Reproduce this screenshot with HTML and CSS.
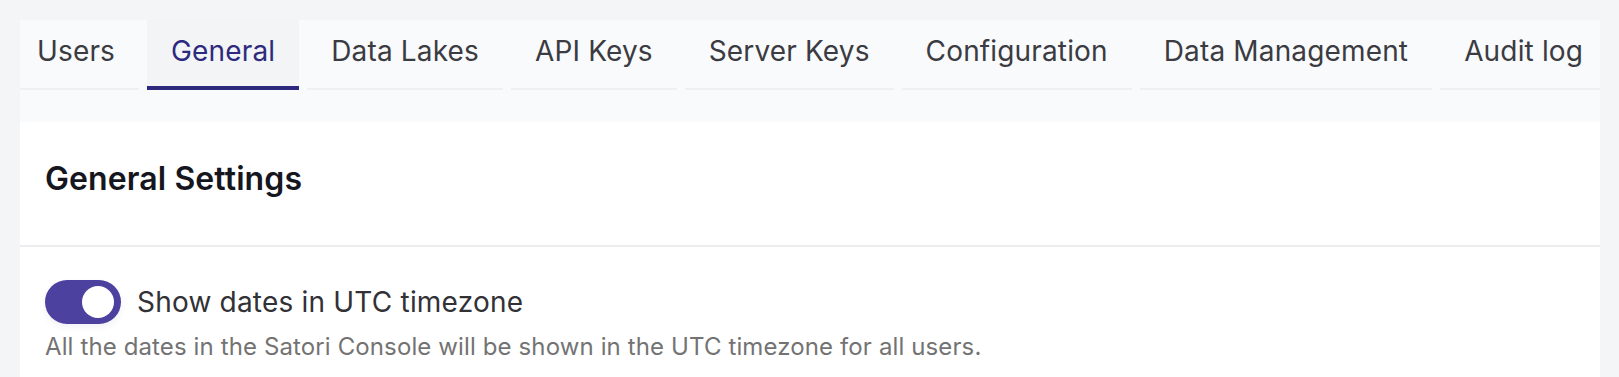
FILE: index.html
```html
<!DOCTYPE html>
<html lang="en">
<head>
<meta charset="utf-8">
<title>Settings - General</title>
<link rel="stylesheet" href="styles.css">
</head>
<body>
<div class="page">
  <div class="tabs-area">
    <nav class="tabs">
      <div class="tab tab-first">Users</div>
      <div class="tab tab-active">General</div>
      <div class="tab">Data Lakes</div>
      <div class="tab">API Keys</div>
      <div class="tab">Server Keys</div>
      <div class="tab">Configuration</div>
      <div class="tab">Data Management</div>
      <div class="tab">Audit log</div>
    </nav>
  </div>
  <section class="panel">
    <header class="panel-header">
      <h2 class="panel-title">General Settings</h2>
    </header>
    <div class="panel-body">
      <div class="setting-row">
        <span class="toggle toggle-on"><span class="toggle-thumb"></span></span>
        <span class="setting-label">Show dates in UTC timezone</span>
      </div>
      <p class="setting-desc">All the dates in the Satori Console will be shown in the UTC timezone for all users.</p>
    </div>
  </section>
</div>
</body>
</html>
```

FILE: styles.css
```css
* { box-sizing: border-box; }

html, body {
  margin: 0;
  padding: 0;
}

body {
  background: #f4f5f7;
  font-family: Inter, "Noto Sans", "Liberation Sans", sans-serif;
  overflow: hidden;
}

.page {
  padding: 20px 19px 0 20px;
}

.tabs-area {
  background: #f9fafb;
  padding-bottom: 32px;
}

.tabs {
  display: flex;
  gap: 8px;
  overflow: hidden;
}

.tab {
  flex-shrink: 0;
  height: 70px;
  padding: 14px 24px 0;
  font-size: 28px;
  line-height: 34px;
  letter-spacing: 0.15px;
  color: #3b3b42;
  white-space: nowrap;
  border-bottom: 2px solid #eef0f2;
}

.tab-first {
  padding-left: 17px;
}

.tab-active {
  background: #f3f4f6;
  color: #2d2a7e;
  border-bottom: 4px solid #2d2a7e;
}

.panel {
  background: #ffffff;
  min-height: 260px;
}

.panel-header {
  padding: 37px 25px 46px;
  border-bottom: 2px solid #ececee;
}

.panel-title {
  margin: 0;
  font-size: 32px;
  line-height: 40px;
  font-weight: 600;
  letter-spacing: 0.1px;
  color: #15161e;
}

.panel-body {
  padding: 33px 25px 0;
}

.setting-row {
  display: flex;
  align-items: center;
  gap: 16px;
}

.toggle {
  position: relative;
  display: inline-block;
  width: 76px;
  height: 44px;
  border-radius: 22px;
  background: #c9cbd1;
  flex-shrink: 0;
}

.toggle-on {
  background: #4c419e;
  box-shadow: 0 3px 6px rgba(76, 65, 158, 0.08);
}

.toggle-thumb {
  position: absolute;
  top: 6px;
  right: 7px;
  width: 32px;
  height: 32px;
  border-radius: 50%;
  background: #ffffff;
}

.setting-label {
  font-size: 28px;
  line-height: 34px;
  letter-spacing: 0.2px;
  color: #313136;
}

.setting-desc {
  margin: 7px 0 0;
  font-size: 24px;
  line-height: 32px;
  letter-spacing: 0.12px;
  color: #737373;
}
```
